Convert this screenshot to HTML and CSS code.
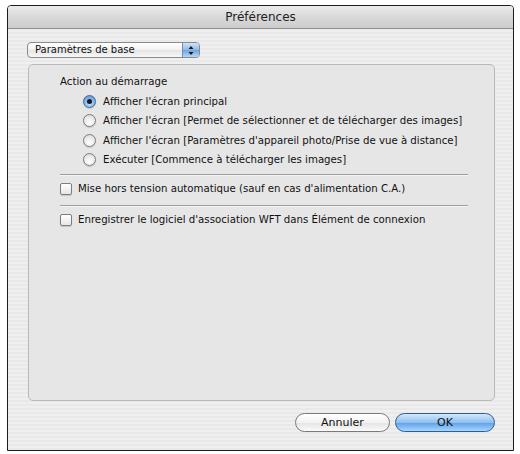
FILE: index.html
```html
<!DOCTYPE html>
<html lang="fr">
<head>
    <meta charset="UTF-8">
    <link rel="stylesheet" href="styles.css">
    <title>Préférences</title>
</head>
<body>
    <div class="window">
        <div class="titlebar">Préférences</div>
        <div class="content">
            <div class="popup">
                <span class="popup-label">Paramètres de base</span>
                <span class="popup-arrows">
                    <svg width="8" height="11" viewBox="0 0 8 11">
                        <path d="M4 1 L6.5 4 L1.5 4 Z" fill="#1a1a1a"/>
                        <path d="M4 10 L6.5 7 L1.5 7 Z" fill="#1a1a1a"/>
                    </svg>
                </span>
            </div>
            <div class="groupbox">
                <div class="group-title">Action au démarrage</div>
                <div class="radio-list">
                    <label class="radio-row"><span class="radio checked"></span>Afficher l'écran principal</label>
                    <label class="radio-row"><span class="radio"></span>Afficher l'écran [Permet de sélectionner et de télécharger des images]</label>
                    <label class="radio-row"><span class="radio"></span>Afficher l'écran [Paramètres d'appareil photo/Prise de vue à distance]</label>
                    <label class="radio-row"><span class="radio"></span>Exécuter [Commence à télécharger les images]</label>
                </div>
                <div class="separator"></div>
                <label class="check-row"><span class="checkbox"></span>Mise hors tension automatique (sauf en cas d'alimentation C.A.)</label>
                <div class="separator"></div>
                <label class="check-row"><span class="checkbox"></span>Enregistrer le logiciel d'association WFT dans Élément de connexion</label>
            </div>
            <div class="buttons">
                <button class="btn">Annuler</button>
                <button class="btn default">OK</button>
            </div>
        </div>
    </div>
</body>
</html>
```

FILE: styles.css
```css
body {
    margin: 0;
    padding: 5px 0 0 7px;
    background: #fff;
    font-family: 'DejaVu Sans', Verdana, sans-serif;
    font-size: 10.2px;
    color: #111;
}

.window {
    width: 505px;
    height: 444px;
    border: 1px solid #1c1c1c;
    border-radius: 4px 4px 0 0;
    background: repeating-linear-gradient(#efefef 0, #efefef 2px, #e9e9e9 2px, #e9e9e9 4px);
    display: flex;
    flex-direction: column;
    overflow: hidden;
}

.titlebar {
    height: 22px;
    border-bottom: 1px solid #8f8f8f;
    background: linear-gradient(#ebebeb, #d9d9d9 50%, #cccccc);
    text-align: center;
    font-size: 12px;
    line-height: 23px;
    color: #222;
}

.content {
    flex: 1;
    display: flex;
    flex-direction: column;
    padding: 13px 18px 0 19px;
}

.popup {
    width: 171px;
    height: 14px;
    border: 1px solid #8a8a8a;
    border-radius: 4px;
    background: linear-gradient(#ffffff, #f1f1f1 50%, #e4e4e4 51%, #f7f7f7);
    display: flex;
    align-items: center;
    overflow: hidden;
}

.popup-label {
    flex: 1;
    padding-left: 7px;
    font-size: 10px;
    line-height: 14px;
}

.popup-arrows {
    width: 16px;
    height: 14px;
    border-left: 1px solid #6d8fb8;
    background: linear-gradient(#cfe3f8, #8fb8e6 50%, #6ea3dd 51%, #b5d7f8);
    display: flex;
    align-items: center;
    justify-content: center;
}

.groupbox {
    margin: 6px 0 0 1px;
    height: 335px;
    border: 1px solid #b9b9b9;
    border-radius: 5px;
    background: #e6e6e6;
    padding: 0 26px 0 31px;
}

.group-title {
    margin-top: 8px;
    height: 17px;
    line-height: 17px;
}

.radio-list {
    padding: 2px 0 5px 23px;
}

.radio-row {
    display: flex;
    align-items: center;
    height: 19.33px;
    white-space: nowrap;
}

.radio {
    flex: none;
    width: 11px;
    height: 11px;
    border: 1px solid #7d7d7d;
    border-radius: 50%;
    background: radial-gradient(circle at 50% 70%, #ffffff, #e8e8e8 60%, #cfcfcf);
    margin-right: 7px;
    position: relative;
    box-shadow: 0 1px 1px rgba(0, 0, 0, 0.15);
}

.radio.checked {
    border-color: #3f6796;
    background: radial-gradient(circle at 50% 70%, #bfe0ff, #7fb2ea 55%, #4f8ed6);
}

.radio.checked::after {
    content: '';
    position: absolute;
    left: 3px;
    top: 3px;
    width: 5px;
    height: 5px;
    border-radius: 50%;
    background: #1b1b1b;
}

.separator {
    height: 1px;
    background: #9e9e9e;
    border-bottom: 1px solid #f4f4f4;
}

.check-row {
    display: flex;
    align-items: center;
    height: 25px;
    padding-bottom: 4px;
    white-space: nowrap;
}

.checkbox {
    flex: none;
    width: 10px;
    height: 10px;
    border: 1px solid #7d7d7d;
    border-radius: 2px;
    background: linear-gradient(#ffffff, #e6e6e6);
    margin-right: 6px;
    box-shadow: 0 1px 1px rgba(0, 0, 0, 0.15);
}

.buttons {
    display: flex;
    justify-content: flex-end;
    gap: 5px;
    margin-top: 12px;
}

.btn {
    height: 19px;
    border: 1px solid #7a7a7a;
    border-radius: 10px;
    background: linear-gradient(#ffffff, #f2f2f2 50%, #e3e3e3 51%, #fbfbfb);
    font-family: 'DejaVu Sans', Verdana, sans-serif;
    font-size: 11px;
    color: #111;
    padding: 0;
    width: 95px;
    line-height: 17px;
}

.btn.default {
    width: 100px;
    border-color: #2f5f99;
    background: linear-gradient(#d3e8fb, #8fbfef 50%, #5d9fe6 51%, #a9d6ff);
}
```
